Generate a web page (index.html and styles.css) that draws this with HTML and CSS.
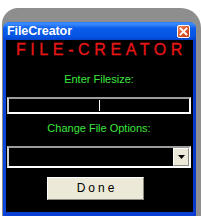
FILE: index.html
```html
<!DOCTYPE html>
<html>
<head>
<meta charset="utf-8">
<link rel="stylesheet" href="styles.css">
</head>
<body>
<div class="shade">
  <div class="win">
    <div class="title">
      <span class="title-text">FileCreator</span>
      <span class="close">
        <svg width="13" height="13" viewBox="0 0 13 13">
          <path d="M3.5 3.5 L9.5 9.5 M9.5 3.5 L3.5 9.5" stroke="#fff" stroke-width="1.8" stroke-linecap="square"/>
        </svg>
      </span>
    </div>
    <div class="frame">
      <div class="content">
        <div class="brand">FILE-CREATOR</div>
        <div class="label l1">Enter Filesize:</div>
        <div class="field"><span class="caret"></span></div>
        <div class="label l2">Change File Options:</div>
        <div class="field select">
          <span class="drop">
            <svg width="7" height="4" viewBox="0 0 7 4"><path d="M0 0 H7 L3.5 4 Z" fill="#000"/></svg>
          </span>
        </div>
        <div class="btn">Done</div>
      </div>
    </div>
  </div>
</div>
</body>
</html>
```
FILE: styles.css
```css
html, body {
  margin: 0;
  padding: 0;
}
body {
  width: 201px;
  height: 220px;
  overflow: hidden;
  background: #ffffff;
  font-family: "Liberation Sans", Arial, sans-serif;
}
.shade {
  margin-top: 8px;
  margin-left: 2px;
  background: #8e8e8e;
  border-radius: 16px 20px 0 0;
  padding: 14px 5px 0 1px;
}
.win {
  width: 193px;
  display: flex;
  flex-direction: column;
}
.title {
  height: 18px;
  border-radius: 6px 6px 0 0;
  background: linear-gradient(#2a74f6 0%, #3d8dff 10%, #0a5cea 35%, #0554e4 80%, #0444cc 100%);
  display: flex;
  align-items: center;
  justify-content: space-between;
  padding: 0 6px 0 4px;
}
.title-text {
  color: #ffffff;
  font-weight: bold;
  font-size: 12.5px;
  line-height: 14px;
  letter-spacing: -0.1px;
}
.close {
  width: 13px;
  height: 13px;
  box-sizing: border-box;
  border: 1px solid #ffffff;
  border-radius: 2px;
  background: linear-gradient(135deg, #f08a60 0%, #e0552c 50%, #c83a14 100%);
  display: flex;
}
.close svg {
  margin: -1px;
}
.frame {
  border: 3px solid #0a3fd6;
  border-top: 0;
  border-bottom-width: 4px;
  border-left-color: #0c45dc;
  border-right-color: #0838cc;
}
.content {
  background: #000000;
  display: flex;
  flex-direction: column;
  padding: 2px 2px 12px 1px;
}
.brand {
  color: #e81616;
  font-size: 16px;
  line-height: 16px;
  letter-spacing: 4.6px;
  text-align: center;
  padding-left: 5px;
  -webkit-text-stroke: 0.3px #e81616;
}
.label {
  color: #3ce63c;
  font-size: 11px;
  line-height: 13px;
  text-align: center;
}
.l1 {
  margin-top: 15px;
}
.l2 {
  margin-top: 8px;
}
.field {
  margin-top: 11px;
  height: 17px;
  box-sizing: border-box;
  border-style: solid;
  border-width: 2px;
  border-color: #9c9c9c #ffffff #ffffff #cfcfcf;
  background: #000000;
  display: flex;
  align-items: center;
  justify-content: center;
}
.caret {
  width: 1px;
  height: 11px;
  background: #ffffff;
  margin-left: 1px;
}
.select {
  height: 22px;
  justify-content: flex-end;
}
.drop {
  width: 16px;
  height: 18px;
  box-sizing: border-box;
  background: #ece9d8;
  border: 1px solid;
  border-color: #ffffff #8a8a80 #8a8a80 #ffffff;
  display: flex;
  align-items: center;
  justify-content: center;
}
.btn {
  align-self: flex-start;
  margin-left: 40px;
  margin-top: 9px;
  width: 97px;
  height: 23px;
  box-sizing: border-box;
  background: #ece9d8;
  border: 1px solid;
  border-color: #ffffff #8a8a80 #8a8a80 #ffffff;
  color: #000000;
  font-size: 12px;
  line-height: 21px;
  letter-spacing: 3px;
  text-align: center;
  padding-left: 3px;
}
```
